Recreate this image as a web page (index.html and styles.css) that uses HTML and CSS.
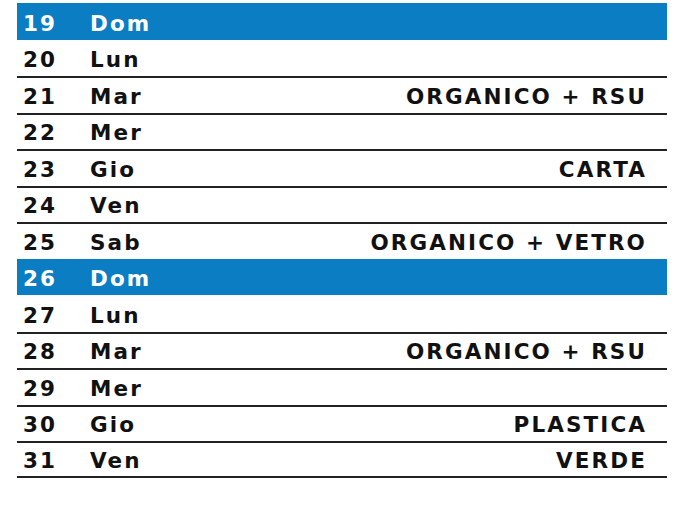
FILE: index.html
```html
<!DOCTYPE html>
<html lang="it">
<head>
<meta charset="utf-8">
<link rel="stylesheet" href="styles.css">
</head>
<body>
<div class="cal">
  <div class="row sun"><span class="num">19</span><span class="day">Dom</span><span class="what"></span></div>
  <div class="row wk"><span class="num">20</span><span class="day">Lun</span><span class="what"></span></div>
  <div class="row wk"><span class="num">21</span><span class="day">Mar</span><span class="what">ORGANICO + RSU</span></div>
  <div class="row wk"><span class="num">22</span><span class="day">Mer</span><span class="what"></span></div>
  <div class="row wk"><span class="num">23</span><span class="day">Gio</span><span class="what">CARTA</span></div>
  <div class="row wk"><span class="num">24</span><span class="day">Ven</span><span class="what"></span></div>
  <div class="row wk"><span class="num">25</span><span class="day">Sab</span><span class="what">ORGANICO + VETRO</span></div>
  <div class="row sun"><span class="num">26</span><span class="day">Dom</span><span class="what"></span></div>
  <div class="row wk"><span class="num">27</span><span class="day">Lun</span><span class="what"></span></div>
  <div class="row wk"><span class="num">28</span><span class="day">Mar</span><span class="what">ORGANICO + RSU</span></div>
  <div class="row wk"><span class="num">29</span><span class="day">Mer</span><span class="what"></span></div>
  <div class="row wk"><span class="num">30</span><span class="day">Gio</span><span class="what">PLASTICA</span></div>
  <div class="row wk last"><span class="num">31</span><span class="day">Ven</span><span class="what">VERDE</span></div>
</div>
</body>
</html>
```
FILE: styles.css
```css
html, body {
  margin: 0;
  padding: 0;
  background: #fff;
}
body {
  padding: 3px 11px 0 17px;
  font-family: "DejaVu Sans", sans-serif;
  font-weight: bold;
  font-size: 21.5px;
  letter-spacing: 2.1px;
  color: #111;
}
.cal {
  display: flex;
  flex-direction: column;
}
.row {
  box-sizing: border-box;
  height: 36.5px;
  display: flex;
  align-items: center;
  padding: 4px 20px 0 6px;
}
.row.sun {
  background: #0b7dc3;
  color: #fff;
}
.row.wk + .row.wk {
  border-top: 2px solid #222;
  padding-top: 2px;
}
.row.last {
  border-bottom: 2px solid #222;
}
.num {
  width: 67px;
}
.day {
  flex: 0 0 auto;
}
.what {
  flex: 1;
  text-align: right;
}
```
